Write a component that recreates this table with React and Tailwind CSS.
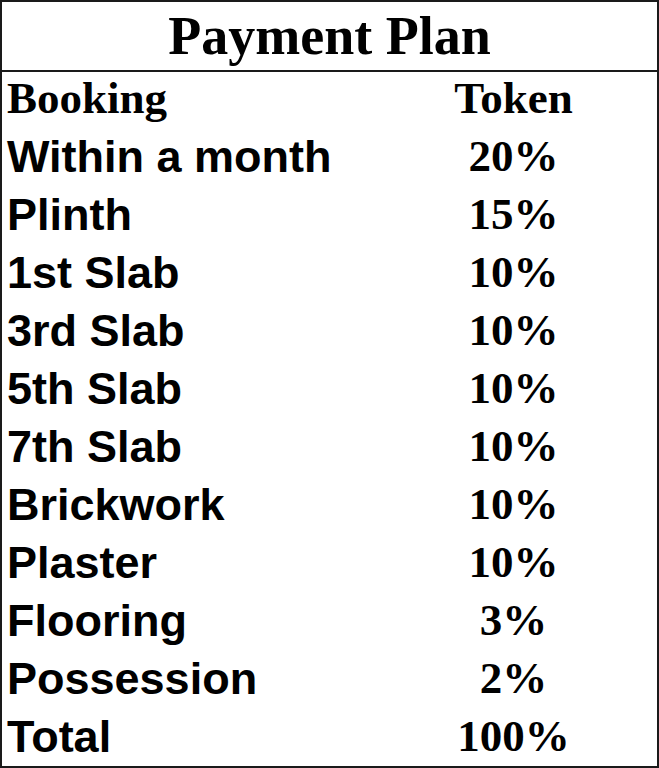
export default function App() {
  const rows = [
    ["Within a month", "20%"],
    ["Plinth", "15%"],
    ["1st Slab", "10%"],
    ["3rd Slab", "10%"],
    ["5th Slab", "10%"],
    ["7th Slab", "10%"],
    ["Brickwork", "10%"],
    ["Plaster", "10%"],
    ["Flooring", "3%"],
    ["Possession", "2%"],
    ["Total", "100%"],
  ];
  return (
    <div className="w-[659px] h-[768px] bg-white text-black box-border border-2 border-[#1a1a1a] flex flex-col overflow-hidden">
      <div className="h-[70px] shrink-0 border-b-2 border-[#1a1a1a] flex items-center justify-center">
        <span className="font-['Liberation_Serif','Times_New_Roman',serif] font-bold text-[54px] leading-none">
          Payment Plan
        </span>
      </div>
      <div className="grid grid-cols-[368px_1fr]">
        <div className="h-[58px] pb-[5px] flex items-center pl-[5px] font-['Liberation_Serif','Times_New_Roman',serif] font-bold text-[45px] leading-none">
          Booking
        </div>
        <div className="h-[58px] pb-[5px] flex items-center justify-center font-['Liberation_Serif','Times_New_Roman',serif] font-bold text-[45px] leading-none">
          Token
        </div>
        {rows.map(([a, b], i) => (
          <div key={i} className="contents">
            <div className="h-[58px] pb-[5px] flex items-center pl-[5px] font-['Liberation_Sans',Arial,sans-serif] font-bold text-[45px] leading-none whitespace-nowrap">
              {a}
            </div>
            <div className="h-[58px] pb-[5px] flex items-center justify-center font-['Liberation_Serif','Times_New_Roman',serif] font-bold text-[45px] leading-none">
              {b}
            </div>
          </div>
        ))}
      </div>
    </div>
  );
}
